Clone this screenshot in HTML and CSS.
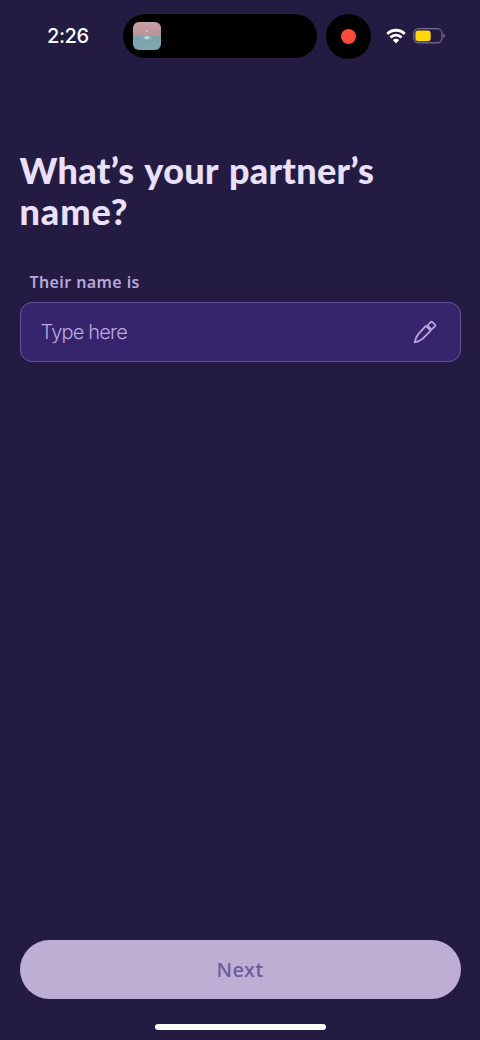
FILE: index.html
```html
<!DOCTYPE html>
<html lang="en">
<head>
<meta charset="utf-8">
<title>Partner's name</title>
<link rel="stylesheet" href="styles.css">
</head>
<body>
<div class="screen">
  <header class="status">
    <time class="clock">2:26</time>
    <div class="island">
      <svg class="app-art" viewBox="0 0 28 28">
        <defs>
          <linearGradient id="sky" x1="0" y1="0" x2="0" y2="1"><stop offset="0" stop-color="#c6a0a7"/><stop offset="1" stop-color="#bd9298"/></linearGradient>
          <linearGradient id="sea" x1="0" y1="0" x2="0" y2="1"><stop offset="0" stop-color="#7ba3ad"/><stop offset="1" stop-color="#82a5b0"/></linearGradient>
          <radialGradient id="glow"><stop offset="0" stop-color="#e8f7f7"/><stop offset="1" stop-color="#a9ccd2" stop-opacity="0"/></radialGradient>
        </defs>
        <path fill="url(#sky)" d="M0 0h28v14H0z"/>
        <path fill="url(#sea)" d="M0 14h28v14H0z"/>
        <ellipse cx="14" cy="15.7" rx="5" ry="2.5" fill="url(#glow)"/>
        <circle cx="14" cy="9" r=".8" fill="#f2e5e6"/>
        <circle cx="14.3" cy="26" r=".6" fill="#bdd6da"/>
      </svg>
    </div>
    <div class="recorder"><span class="record-dot"></span></div>
    <svg class="wifi" viewBox="0 0 20 16">
      <g fill="none" stroke="#fff" stroke-width="2.8">
        <path d="M1.3 6C6.2 1 13.8 1 18.7 6"/>
        <path d="M4.5 9.5C7.6 6.4 12.4 6.4 15.5 9.5"/>
      </g>
      <path fill="#fff" d="M6.8 12.1Q10 9.3 13.2 12.1L10 15.4z"/>
    </svg>
    <svg class="battery" viewBox="0 0 33 16">
      <rect x=".8" y=".7" width="28.2" height="14.2" rx="4.7" fill="none" stroke="#77718f" stroke-width="1.2"/>
      <rect x="2.4" y="2.4" width="15.3" height="10.8" rx="3" fill="#ffd60a"/>
      <path d="M30.5 5.5Q33.3 7.8 30.5 10.1z" fill="#8b859f"/>
    </svg>
  </header>
  <main class="content">
    <h1 class="title">What’s your partner’s<br><span class="title-end">name?</span></h1>
    <label class="label" for="partner">Their name is</label>
    <div class="field">
      <input class="input" id="partner" type="text" placeholder="Type here">
      <svg class="pencil" viewBox="0 0 24 24" fill="none" stroke="#c0a8df" stroke-width="1.7" stroke-linejoin="round">
        <path d="M12.9 5.9 17.7 10.7 9.8 18.6Q6.6 21.3 1.6 22.4 2.7 17.2 5.4 13.9z"/>
        <path d="M15.3 4.5 17.7 2.1Q18.6 1.2 19.5 2.1L21.9 4.5Q22.8 5.4 21.9 6.3L19.5 8.7Q18.6 9.5 17.7 8.7L15.3 6.3Q14.5 5.4 15.3 4.5z"/>
      </svg>
    </div>
  </main>
  <footer class="footer">
    <button class="next" type="button">Next</button>
    <div class="home-bar"></div>
  </footer>
</div>
</body>
</html>
```
FILE: styles.css
```css
* { box-sizing: border-box; }
body { margin: 0; background: #231b41; }
.screen {
  width: 480px;
  height: 1040px;
  display: flex;
  flex-direction: column;
  overflow: hidden;
  background: #231b41;
}
.status {
  display: flex;
  align-items: center;
  height: 44px;
  margin-top: 14px;
}
.clock {
  width: 75.5px;
  margin-left: 47px;
  font: 500 20px/44px Inter, sans-serif;
  letter-spacing: -.4px;
  color: #fff;
}
.island {
  width: 194px;
  height: 44px;
  padding: 8px 10.5px;
  border-radius: 22px;
  background: #000;
}
.app-art { display: block; width: 28px; height: 28px; border-radius: 6px; }
.recorder {
  display: grid;
  place-items: center;
  width: 45px;
  height: 45px;
  margin-left: 9.5px;
  border-radius: 50%;
  background: #000;
}
.record-dot { width: 15px; height: 15px; border-radius: 50%; background: #ff4a38; }
.wifi { width: 20px; height: 16px; margin-left: 15px; }
.battery { width: 33px; height: 16px; margin-left: 7px; }
.content { padding: 92px 19.5px 0; }
.title {
  margin: 0;
  font: 900 36px/41px Lato, sans-serif;
  letter-spacing: .3px;
  word-spacing: 2px;
  white-space: nowrap;
  color: #e9e0fb;
}
.title-end { letter-spacing: .9px; }
.label {
  display: block;
  margin: 40px 0 9px 10px;
  font: 600 16px/21px "Noto Sans", sans-serif;
  letter-spacing: .4px;
  color: #b9a6dc;
}
.field {
  display: flex;
  align-items: center;
  height: 60px;
  padding: 0 22.5px 0 20px;
  border: 1px solid #65549a;
  border-radius: 12px;
  background: #36246d;
}
.input {
  flex: 1;
  min-width: 0;
  padding: 0;
  border: 0;
  outline: 0;
  background: transparent;
  font: 300 20px/28px Inter, sans-serif;
  letter-spacing: -.8px;
  color: #e9e0fb;
}
.input::placeholder { color: #bea8df; opacity: 1; }
.pencil { width: 24px; height: 24px; }
.footer { margin-top: auto; padding: 0 19.5px 10px; }
.next {
  display: block;
  width: 100%;
  height: 59px;
  padding: 0;
  border: 0;
  border-radius: 30px;
  background: #bdaed3;
  font: 500 20px/59px "Noto Sans", sans-serif;
  letter-spacing: .5px;
  color: #6b5b9b;
}
.home-bar {
  width: 171px;
  height: 6px;
  margin: 25.5px auto 0;
  border-radius: 3px;
  background: #fff;
}
```
